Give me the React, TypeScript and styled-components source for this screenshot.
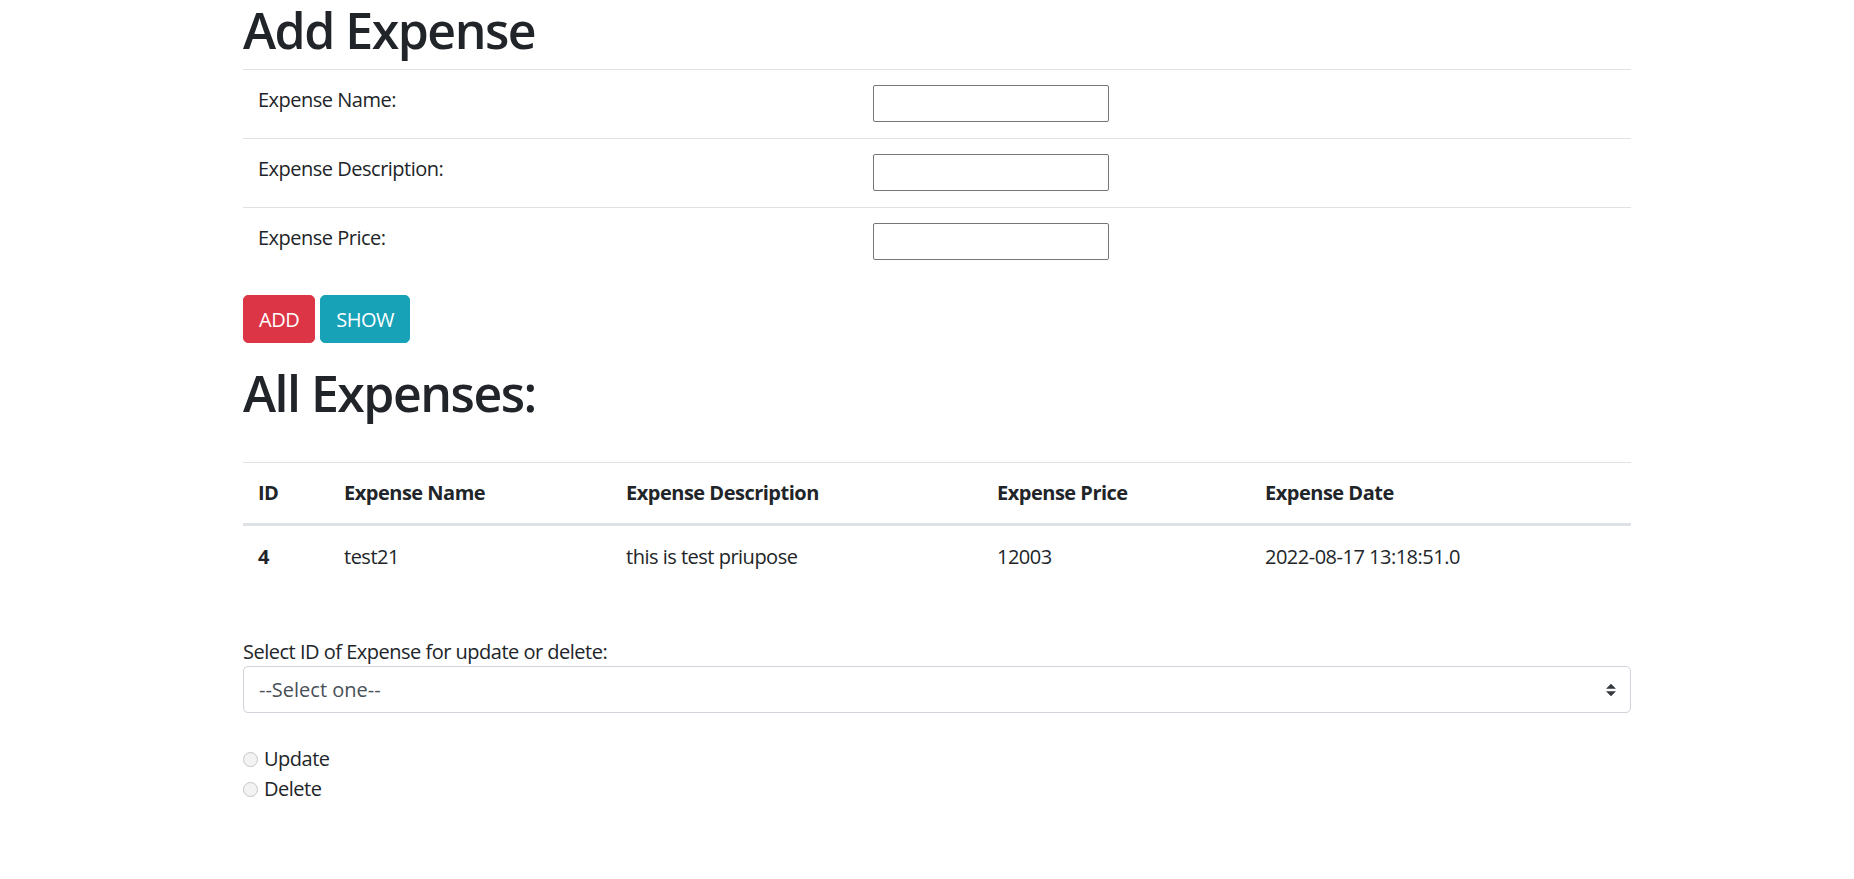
import React, { useState } from 'react';
import styled, { createGlobalStyle } from 'styled-components';

const GlobalStyle = createGlobalStyle`
  body {
    margin: 0;
    font-family: "Open Sans", "Liberation Sans", sans-serif;
    font-size: 20px;
    line-height: 30px;
    letter-spacing: -0.5px;
    color: #212529;
    background: #fff;
  }
`;

const Container = styled.div`
  width: 1388px;
  margin-left: 243px;
`;

const Heading = styled.h1`
  font-size: 50px;
  font-weight: 600;
  line-height: 60px;
  letter-spacing: -1.5px;
  margin: 0 0 9px;
`;

const FormTable = styled.div`
  margin-bottom: 19px;
`;

const FormRow = styled.div`
  display: grid;
  grid-template-columns: 615px 1fr;
  align-items: start;
  border-top: 1px solid #dee2e6;
`;

const FormLabel = styled.label`
  padding: 15px 15px 16px;
`;

const FormCell = styled.div`
  padding: 15px 15px 16px;
`;

const TextInput = styled.input`
  box-sizing: border-box;
  width: 236px;
  height: 37px;
  border: 1px solid #767676;
  border-radius: 2px;
  padding: 1px 3px;
  font: inherit;
  display: block;
`;

const ButtonRow = styled.div`
  display: flex;
  gap: 5px;
  margin-bottom: 20px;
`;

const Button = styled.button<{ $variant: 'danger' | 'info' }>`
  height: 48px;
  padding: 0 15px;
  border: 1px solid ${p => (p.$variant === 'danger' ? '#dc3545' : '#17a2b8')};
  border-radius: 5px;
  background: ${p => (p.$variant === 'danger' ? '#dc3545' : '#17a2b8')};
  color: #fff;
  font-family: inherit;
  font-size: 20px;
  letter-spacing: -0.5px;
  cursor: pointer;
`;

const DataTable = styled.table`
  width: 100%;
  border-collapse: collapse;
  table-layout: fixed;
  margin-top: 39px;
  margin-bottom: 20px;
`;

const Th = styled.th`
  text-align: left;
  font-weight: 700;
  padding: 15px;
  border-top: 1px solid #dee2e6;
  border-bottom: 3px solid #dee2e6;
  vertical-align: bottom;
`;

const Td = styled.td<{ $bold?: boolean }>`
  padding: 16px 15px 15px;
  font-weight: ${p => (p.$bold ? 700 : 400)};
  vertical-align: top;
`;

const SelectLabel = styled.label`
  display: block;
  margin-top: 50px;
`;

const SelectWrap = styled.div`
  position: relative;
  margin-top: -1px;
`;

const Select = styled.select`
  box-sizing: border-box;
  display: block;
  width: 100%;
  height: 47px;
  padding: 0 40px 0 15px;
  border: 1px solid #ced4da;
  border-radius: 5px;
  background: #fff;
  color: #495057;
  font: inherit;
  appearance: none;
`;

const Arrow = styled.svg`
  position: absolute;
  right: 15px;
  top: 50%;
  width: 10px;
  height: 13px;
  transform: translateY(-50%);
  pointer-events: none;
`;

const RadioGroup = styled.div`
  margin-top: 31px;
`;

const RadioLine = styled.label`
  display: flex;
  align-items: center;
  gap: 6px;
`;

const Radio = styled.input`
  appearance: none;
  margin: 0;
  width: 15px;
  height: 15px;
  border-radius: 50%;
  border: 1px solid #c6c6c6;
  background: #f3f3f3;
`;

const fields = ['Expense Name:', 'Expense Description:', 'Expense Price:'];

const columns = [
  { title: 'ID', width: 86 },
  { title: 'Expense Name', width: 282 },
  { title: 'Expense Description', width: 371 },
  { title: 'Expense Price', width: 268 },
  { title: 'Expense Date', width: 381 },
];

const expenses = [
  { id: 4, name: 'test21', description: 'this is test priupose', price: 12003, date: '2022-08-17 13:18:51.0' },
];

export default function App() {
  const [action, setAction] = useState('');

  return (
    <Container>
      <GlobalStyle />
      <Heading>Add Expense</Heading>
      <FormTable>
        {fields.map(f => (
          <FormRow key={f}>
            <FormLabel>{f}</FormLabel>
            <FormCell>
              <TextInput type="text" />
            </FormCell>
          </FormRow>
        ))}
      </FormTable>

      <ButtonRow>
        <Button $variant="danger">ADD</Button>
        <Button $variant="info">SHOW</Button>
      </ButtonRow>

      <Heading>All Expenses:</Heading>
      <DataTable>
        <colgroup>
          {columns.map(c => (
            <col key={c.title} style={{ width: c.width }} />
          ))}
        </colgroup>
        <thead>
          <tr>
            {columns.map(c => (
              <Th key={c.title}>{c.title}</Th>
            ))}
          </tr>
        </thead>
        <tbody>
          {expenses.map(e => (
            <tr key={e.id}>
              <Td $bold>{e.id}</Td>
              <Td>{e.name}</Td>
              <Td>{e.description}</Td>
              <Td>{e.price}</Td>
              <Td>{e.date}</Td>
            </tr>
          ))}
        </tbody>
      </DataTable>

      <SelectLabel htmlFor="expense-id">Select ID of Expense for update or delete:</SelectLabel>
      <SelectWrap>
        <Select id="expense-id" defaultValue="">
          <option value="">--Select one--</option>
          {expenses.map(e => (
            <option key={e.id} value={e.id}>{e.id}</option>
          ))}
        </Select>
        <Arrow viewBox="0 0 4 5">
          <path fill="#343a40" d="M2 0L0 2h4zm0 5L0 3h4z" />
        </Arrow>
      </SelectWrap>

      <RadioGroup>
        <RadioLine>
          <Radio type="radio" name="action" checked={action === 'update'} onChange={() => setAction('update')} />
          Update
        </RadioLine>
        <RadioLine>
          <Radio type="radio" name="action" checked={action === 'delete'} onChange={() => setAction('delete')} />
          Delete
        </RadioLine>
      </RadioGroup>
    </Container>
  );
}
